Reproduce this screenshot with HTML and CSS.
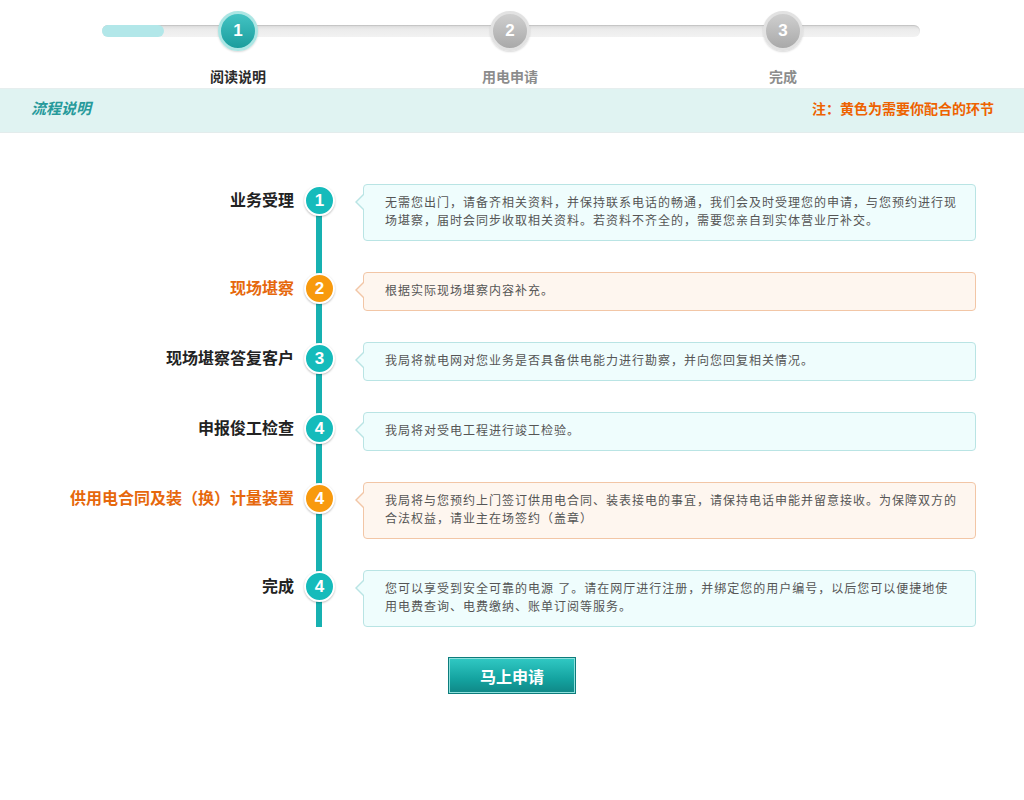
FILE: index.html
```html
<!DOCTYPE html>
<html lang="zh-CN">
<head>
<meta charset="utf-8">
<title>流程说明</title>
<link rel="stylesheet" href="styles.css">
</head>
<body>
<div class="steps">
  <div class="step active">
    <div class="step-dot">1</div>
    <div class="step-label">阅读说明</div>
  </div>
  <div class="step">
    <div class="step-dot">2</div>
    <div class="step-label">用电申请</div>
  </div>
  <div class="step">
    <div class="step-dot">3</div>
    <div class="step-label">完成</div>
  </div>
</div>

<div class="band">
  <span class="band-title">流程说明</span>
  <span class="band-note">注：黄色为需要你配合的环节</span>
</div>

<div class="timeline">
  <div class="row">
    <div class="title">业务受理</div>
    <div class="dot">1</div>
    <div class="box">无需您出门，请备齐相关资料，并保持联系电话的畅通，我们会及时受理您的申请，与您预约进行现场堪察，届时会同步收取相关资料。若资料不齐全的，需要您亲自到实体营业厅补交。</div>
  </div>
  <div class="row warn">
    <div class="title">现场堪察</div>
    <div class="dot">2</div>
    <div class="box">根据实际现场堪察内容补充。</div>
  </div>
  <div class="row">
    <div class="title">现场堪察答复客户</div>
    <div class="dot">3</div>
    <div class="box">我局将就电网对您业务是否具备供电能力进行勘察，并向您回复相关情况。</div>
  </div>
  <div class="row">
    <div class="title">申报俊工检查</div>
    <div class="dot">4</div>
    <div class="box">我局将对受电工程进行竣工检验。</div>
  </div>
  <div class="row warn">
    <div class="title">供用电合同及装（换）计量装置</div>
    <div class="dot">4</div>
    <div class="box">我局将与您预约上门签订供用电合同、装表接电的事宜，请保持电话申能并留意接收。为保障双方的合法权益，请业主在场签约（盖章）</div>
  </div>
  <div class="row">
    <div class="title">完成</div>
    <div class="dot">4</div>
    <div class="box">您可以享受到安全可靠的电源 了。请在网厅进行注册，并绑定您的用户编号，以后您可以便捷地使用电费查询、电费缴纳、账单订阅等服务。</div>
  </div>
</div>

<div class="actions">
  <button class="apply" type="button">马上申请</button>
</div>
</body>
</html>
```

FILE: styles.css
```css
* { box-sizing: border-box; }

body {
  margin: 0;
  background: #fff;
  font-family: "Liberation Sans", "Noto Sans CJK SC", sans-serif;
  color: #333;
}

/* ---------- progress steps ---------- */
.steps {
  position: relative;
  width: 818px;
  margin-left: 102px;
  padding-top: 11px;
  height: 88px;
  display: grid;
  grid-template-columns: 272px 272px 274px;
}
.steps::before {
  content: "";
  position: absolute;
  left: 0;
  right: 0;
  top: 25px;
  height: 12px;
  border-radius: 6px;
  background: linear-gradient(#dcdcdc, #ececec 40%, #f2f2f2);
  box-shadow: inset 0 1px 1px rgba(0,0,0,0.12);
}
.steps::after {
  content: "";
  position: absolute;
  left: 0;
  top: 25px;
  width: 62px;
  height: 12px;
  border-radius: 6px;
  background: #b2e7e9;
}
.step {
  position: relative;
  z-index: 1;
  display: flex;
  flex-direction: column;
  align-items: center;
}
.step-dot {
  width: 40px;
  height: 40px;
  border-radius: 50%;
  border: 3px solid #e2e2e2;
  background: linear-gradient(#cfcfcf, #a9a9a9);
  color: #fff;
  font: bold 17px/34px "Liberation Sans", Arial, sans-serif;
  text-align: center;
  box-shadow: 0 1px 2px rgba(0,0,0,0.15);
}
.step.active .step-dot {
  border-color: #ace6e4;
  background: linear-gradient(#43c3c3, #1b9d9d);
}
.step-label {
  margin-top: 16px;
  font-size: 14px;
  line-height: 20px;
  font-weight: bold;
  color: #8c8c8c;
}
.step.active .step-label {
  color: #2b2b2b;
}

/* ---------- band ---------- */
.band {
  height: 45px;
  background: #e0f3f2;
  border-top: 1px solid #e6eeee;
  border-bottom: 1px solid #e3ecec;
  display: flex;
  align-items: center;
  justify-content: space-between;
  padding: 0 30px 6px 31px;
}
.band-title {
  font-size: 15px;
  font-weight: bold;
  font-style: italic;
  color: #279a9b;
}
.band-note {
  font-size: 14px;
  font-weight: bold;
  color: #ee6200;
}

/* ---------- timeline ---------- */
.timeline {
  margin-top: 51px;
  background: linear-gradient(#17b1b1, #17b1b1) no-repeat 316px 17px / 6px calc(100% - 17px);
}
.row {
  display: flex;
  align-items: flex-start;
  margin-bottom: 31px;
}
.row:last-child { margin-bottom: 0; }

.title {
  width: 294px;
  margin-top: 6px;
  text-align: right;
  font-size: 16px;
  line-height: 22px;
  font-weight: bold;
  color: #222;
}
.row.warn .title { color: #e6680c; }

.dot {
  width: 31px;
  height: 31px;
  margin: 1px 0 0 10px;
  border-radius: 50%;
  border: 2px solid #fff;
  background: #15bbbb;
  color: #fff;
  font: bold 17px/27px "Liberation Sans", Arial, sans-serif;
  text-align: center;
  box-shadow: 0 1px 2px rgba(0,0,0,0.25);
}
.row.warn .dot { background: #f89a0e; }

.box {
  position: relative;
  width: 613px;
  margin-left: 28px;
  padding: 9px 18px 10px 21px;
  border: 1px solid #b9e4e4;
  border-radius: 4px;
  background: #effdfd;
  font-size: 12px;
  line-height: 18px;
  letter-spacing: 1px;
  color: #555;
}
.box::before,
.box::after {
  content: "";
  position: absolute;
  top: 8px;
  border-style: solid;
  border-color: transparent;
}
.box::before {
  left: -9px;
  border-width: 9px 9px 9px 0;
  border-right-color: #b9e4e4;
}
.box::after {
  left: -7px;
  top: 9px;
  border-width: 8px 8px 8px 0;
  border-right-color: #effdfd;
}
.row.warn .box {
  border-color: #f2c6a6;
  background: #fef6ef;
}
.row.warn .box::before { border-right-color: #f2c6a6; }
.row.warn .box::after { border-right-color: #fef6ef; }

/* ---------- button ---------- */
.actions {
  display: flex;
  justify-content: center;
  margin-top: 30px;
}
.apply {
  width: 128px;
  height: 37px;
  border: 1px solid #0d7c7c;
  box-shadow: inset 0 0 0 1px #8fe0dc;
  background: linear-gradient(#31c9c4, #14a3a0 60%, #0f8786);
  color: #fff;
  font-family: "Liberation Sans", "Noto Sans CJK SC", sans-serif;
  font-size: 16px;
  font-weight: bold;
  padding: 0;
  cursor: pointer;
}
```
